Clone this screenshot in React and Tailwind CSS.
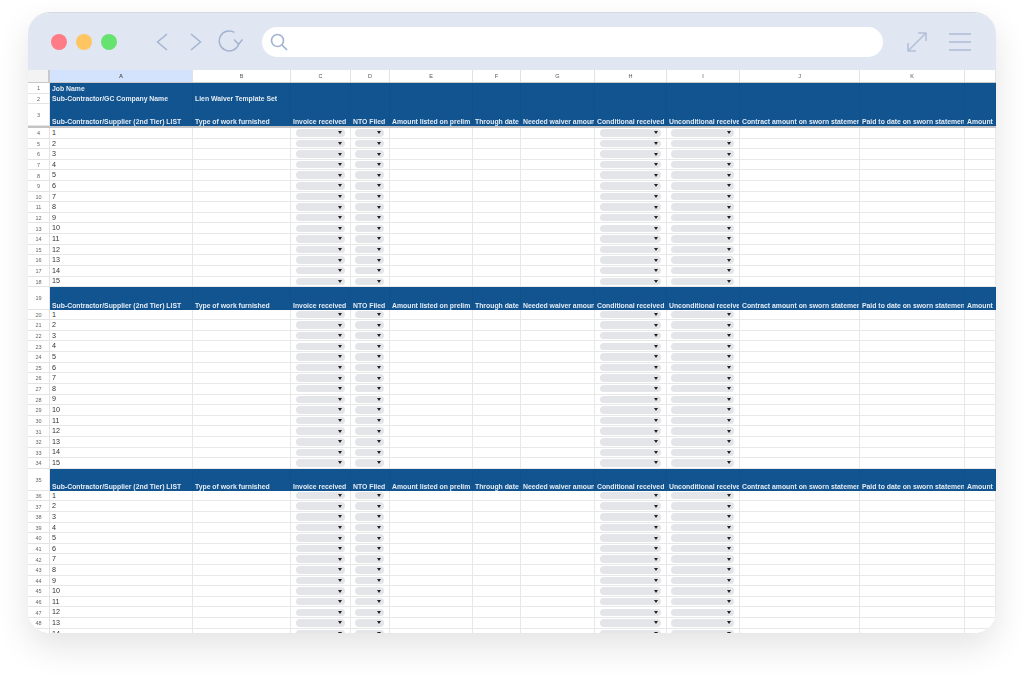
const gridCols =
  "grid grid-cols-[22px_143px_98px_60px_39px_83px_48px_74px_72px_73px_120px_105px_31px]";
const letters = ["A", "B", "C", "D", "E", "F", "G", "H", "I", "J", "K", ""];
const headers = [
  "Sub-Contractor/Supplier (2nd Tier) LIST",
  "Type of work furnished",
  "Invoice received",
  "NTO Filed",
  "Amount listed on prelim",
  "Through date",
  "Needed waiver amount",
  "Conditional received",
  "Unconditional received",
  "Contract amount on sworn statement",
  "Paid to date on sworn statement",
  "Amount owed",
];
const blueCell =
  "flex overflow-hidden whitespace-nowrap border-r border-r-[#105189] bg-[#11548f] pl-[2px] text-[6.85px] font-bold text-[#e4ecf5]";

function RowNum({ n }) {
  return (
    <div className="flex items-center justify-center border-r border-b border-[#e4e4e4] bg-white pt-[1px] text-[5.5px] text-[#666]">
      {n}
    </div>
  );
}

function Pill() {
  return (
    <div className="flex h-[7.5px] w-full items-center justify-end rounded-full bg-[#e3e5e9] pr-[3px]">
      <div className="h-0 w-0 border-x-[2.5px] border-t-[3px] border-x-transparent border-t-[#222]" />
    </div>
  );
}

function HeaderRow({ n, height }) {
  return (
    <div className={`${gridCols} ${height}`}>
      <RowNum n={n} />
      {headers.map((h) => (
        <div key={h} className={`${blueCell} items-end leading-[8px]`}>
          {h}
        </div>
      ))}
    </div>
  );
}

function TitleRow({ n, a, b }) {
  return (
    <div className={`${gridCols} h-[10.5px]`}>
      <RowNum n={n} />
      {letters.map((l, i) => (
        <div key={i} className={`${blueCell} items-center pt-[1px]`}>
          {l === "A" && a}
          {l === "B" && b}
        </div>
      ))}
    </div>
  );
}

function DataRow({ row, value }) {
  return (
    <div className={`${gridCols} h-[10.62px]`}>
      <RowNum n={row} />
      {letters.map((l, i) => (
        <div
          key={i}
          className="flex items-center overflow-hidden border-r border-b border-[#e8e8e8] bg-white text-[7.2px] text-[#333]"
        >
          {l === "A" && <span className="pl-[2px] pt-[1px]">{value}</span>}
          {(l === "C" || l === "H") && (
            <div className="w-full px-[5px]">
              <Pill />
            </div>
          )}
          {(l === "D" || l === "I") && (
            <div className="w-full pl-[4px] pr-[5px]">
              <Pill />
            </div>
          )}
        </div>
      ))}
    </div>
  );
}

function Rows({ start }) {
  return Array.from({ length: 15 }, (_, i) => (
    <DataRow key={i} row={start + i} value={i + 1} />
  ));
}

export default function App() {
  return (
    <div className="h-[678px] w-[1024px] overflow-hidden bg-white pl-[28px] pt-[12px] font-['Liberation_Sans',Arial,sans-serif]">
      <div className="h-[621px] w-[968px] overflow-hidden rounded-[22px] border-t border-[#d6d9df] bg-white shadow-[0_14px_34px_rgba(0,0,0,0.11)]">
        {/* Browser bar */}
        <div className="flex h-[57px] items-center bg-[#e1e7f2] pl-[23px]">
          <div className="flex gap-[9px]">
            <span className="h-[16px] w-[16px] rounded-full bg-[#ff7b86]" />
            <span className="h-[16px] w-[16px] rounded-full bg-[#ffc562]" />
            <span className="h-[16px] w-[16px] rounded-full bg-[#66e36f]" />
          </div>
          <svg width="12" height="18" viewBox="0 0 12 18" fill="none" stroke="#a3b4d1" strokeWidth="1.5" className="ml-[39px]">
            <path d="M11 1 1.5 9l9.5 8" />
          </svg>
          <svg width="12" height="18" viewBox="0 0 12 18" fill="none" stroke="#a3b4d1" strokeWidth="1.5" className="ml-[22px]">
            <path d="M1 1l9.5 8L1 17" />
          </svg>
          <svg width="25" height="23" viewBox="0 0 25 23" fill="none" stroke="#a3b4d1" strokeWidth="1.5" className="ml-[16px]">
            <path d="M16.5 2.4A10 10 0 1 0 20.8 14" />
            <path d="M16 9.5l4.5 4.8 4-4.8" />
          </svg>
          <div className="ml-[19px] flex h-[30px] w-[621px] items-center rounded-full bg-white pl-[8px]">
            <svg width="18" height="18" viewBox="0 0 18 18" fill="none" stroke="#a3b4d1" strokeWidth="1.7">
              <circle cx="7.5" cy="7.5" r="6" />
              <path d="m12 12 5 5" />
            </svg>
          </div>
          <svg width="22" height="22" viewBox="0 0 22 22" fill="none" stroke="#b3c1d9" strokeWidth="1.6" className="ml-[23px]">
            <path d="M2 20 20 2M12 2h8v8M2 12v8h8" />
          </svg>
          <div className="ml-[21px] flex w-[22px] flex-col gap-[6px]">
            <span className="h-[2px] bg-[#b9c6dc]" />
            <span className="h-[2px] bg-[#b9c6dc]" />
            <span className="h-[2px] bg-[#b9c6dc]" />
          </div>
        </div>

        {/* Sheet */}
        <div className="blur-[0.35px]">
          {/* Column letters */}
          <div className={`${gridCols} h-[13px] border-b border-[#c9c9c9]`}>
            <div className="border-r-2 border-r-[#c9c9c9] bg-[#f3f3f3]" />
            {letters.map((l, i) => (
              <div
                key={i}
                className={`flex items-center justify-center border-r border-[#e2e2e2] text-[5.5px] text-[#555] ${
                  l === "A" ? "bg-[#d3e3fd] font-bold" : "bg-white"
                }`}
              >
                {l}
              </div>
            ))}
          </div>

          <TitleRow n={1} a="Job Name" />
          <TitleRow n={2} a="Sub-Contractor/GC Company Name" b="Lien Waiver Template Set" />
          <HeaderRow n={3} height="h-[22px]" />
          <div className="h-[2px] bg-[#c4c4c4]" />

          <Rows start={4} />
          <HeaderRow n={19} height="h-[22.5px]" />
          <Rows start={20} />
          <HeaderRow n={35} height="h-[22px]" />
          <Rows start={36} />
        </div>
      </div>
    </div>
  );
}
